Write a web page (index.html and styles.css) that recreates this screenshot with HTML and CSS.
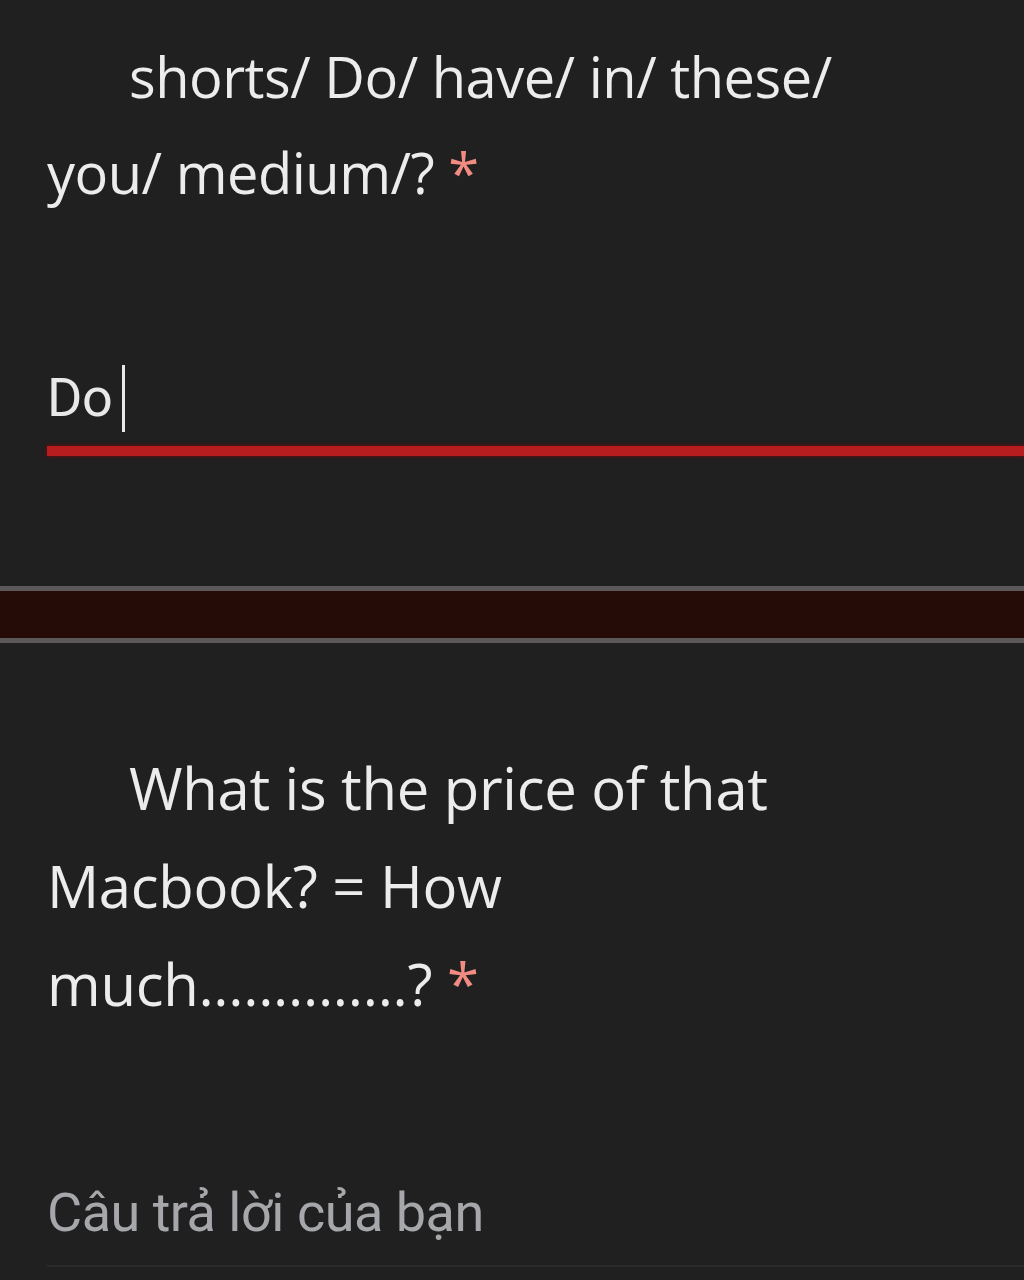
FILE: index.html
```html
<!DOCTYPE html>
<html lang="vi">
<head>
<meta charset="utf-8">
<title>Form</title>
<link rel="stylesheet" href="styles.css">
</head>
<body>
<section class="question q1">
  <div class="title">shorts/ Do/ have/ in/ these/ you/ medium/? <span class="req">*</span></div>
  <div class="answer active">
    <div class="value">Do<span class="caret"></span></div>
    <div class="underline"></div>
  </div>
</section>
<div class="divider"></div>
<section class="question q2">
  <div class="title">What is the price of that Macbook? = How much..............? <span class="req">*</span></div>
  <div class="answer">
    <div class="placeholder">Câu trả lời của bạn</div>
    <div class="underline"></div>
  </div>
</section>
</body>
</html>
```
FILE: styles.css
```css
html, body {
  margin: 0;
  padding: 0;
  background: #202020;
}
body {
  width: 1024px;
  height: 1280px;
  overflow: hidden;
}
.question {
  padding-left: 47px;
}
.title {
  font-family: "Open Sans", sans-serif;
  font-size: 56px;
  line-height: 96px;
  color: #ececec;
  text-indent: 82px;
  letter-spacing: -0.5px;
}
.q1 .title {
  width: 830px;
  padding-top: 28px;
}
.q2 .title {
  width: 800px;
  padding-top: 96px;
  font-size: 58px;
  letter-spacing: -0.3px;
  line-height: 98px;
}
.req {
  color: #f28b82;
}
.answer {
  display: flex;
  flex-direction: column;
}
.q1 .answer {
  padding-top: 140px;
}
.value {
  font-family: Roboto, sans-serif;
  font-size: 54px;
  letter-spacing: -0.5px;
  line-height: 76px;
  color: #e8e8e8;
  display: flex;
  align-items: center;
}
.caret {
  display: inline-block;
  width: 3px;
  height: 67px;
  background: #e8e8e8;
  margin-left: 10px;
}
.underline {
  height: 1px;
}
.active .underline {
  height: 10px;
  margin-top: 10px;
  background: #b71c1f;
  box-shadow: 0 0 4px rgba(150, 0, 0, 0.8);
}
.divider {
  margin-top: 130px;
  height: 47px;
  background: #250c06;
  border-top: 5px solid #5c585a;
  border-bottom: 5px solid #5c585a;
}
.q2 .answer {
  padding-top: 142px;
}
.placeholder {
  font-family: Roboto, sans-serif;
  font-size: 54px;
  letter-spacing: -0.5px;
  line-height: 76px;
  color: #a5a7ab;
}
.q2 .underline {
  margin-top: 14px;
  height: 2px;
  background: #2b2b2b;
}
```
